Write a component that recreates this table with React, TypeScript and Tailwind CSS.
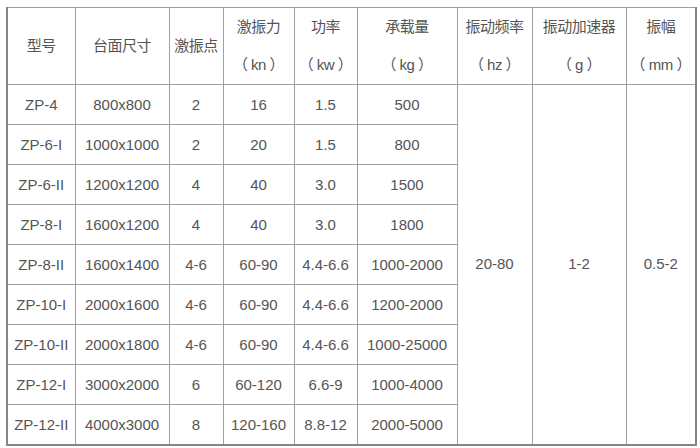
const rows = [
  ["ZP-4", "800x800", "2", "16", "1.5", "500"],
  ["ZP-6-I", "1000x1000", "2", "20", "1.5", "800"],
  ["ZP-6-II", "1200x1200", "4", "40", "3.0", "1500"],
  ["ZP-8-I", "1600x1200", "4", "40", "3.0", "1800"],
  ["ZP-8-II", "1600x1400", "4-6", "60-90", "4.4-6.6", "1000-2000"],
  ["ZP-10-I", "2000x1600", "4-6", "60-90", "4.4-6.6", "1200-2000"],
  ["ZP-10-II", "2000x1800", "4-6", "60-90", "4.4-6.6", "1000-25000"],
  ["ZP-12-I", "3000x2000", "6", "60-120", "6.6-9", "1000-4000"],
  ["ZP-12-II", "4000x3000", "8", "120-160", "8.8-12", "2000-5000"],
];

const heads: [string, string?][] = [
  ["型号"],
  ["台面尺寸"],
  ["激振点"],
  ["激振力", "kn"],
  ["功率", "kw"],
  ["承载量", "kg"],
  ["振动频率", "hz"],
  ["振动加速器", "g"],
  ["振幅", "mm"],
];

const widths = [68, 94, 54, 71, 63, 100, 75, 94, 70];

export default function App() {
  return (
    <div
      className="h-[448px] w-[700px] bg-white pl-[6px] pt-[7px] text-[15px] text-[#555]"
      style={{ fontFamily: '"Liberation Sans", "Noto Sans CJK SC", sans-serif' }}
    >
      <table className="w-[689px] table-fixed border-collapse border-x-2 border-b-2 border-t border-x-[#858585] border-b-[#858585] border-t-[#a8a8a8]">
        <colgroup>
          {widths.map((w, i) => (
            <col key={i} style={{ width: w }} />
          ))}
        </colgroup>
        <thead>
          <tr className="h-[76px]">
            {heads.map(([t, u], i) => (
              <th key={i} className="border border-[#a0a0a0] p-0 text-center font-normal leading-[38px] tracking-[-0.5px]">
                <div>{t}</div>
                {u && <div>（ {u} ）</div>}
              </th>
            ))}
          </tr>
        </thead>
        <tbody>
          {rows.map((r, ri) => (
            <tr key={ri} className="h-[40px]">
              {r.map((c, ci) => (
                <td key={ci} className="border border-[#a0a0a0] p-0 text-center leading-none whitespace-nowrap">
                  {c}
                </td>
              ))}
              {ri === 0 && (
                <>
                  <td rowSpan={9} className="border border-[#a0a0a0] p-0 text-center">20-80</td>
                  <td rowSpan={9} className="border border-[#a0a0a0] p-0 text-center">1-2</td>
                  <td rowSpan={9} className="border border-[#a0a0a0] p-0 text-center">0.5-2</td>
                </>
              )}
            </tr>
          ))}
        </tbody>
      </table>
    </div>
  );
}
